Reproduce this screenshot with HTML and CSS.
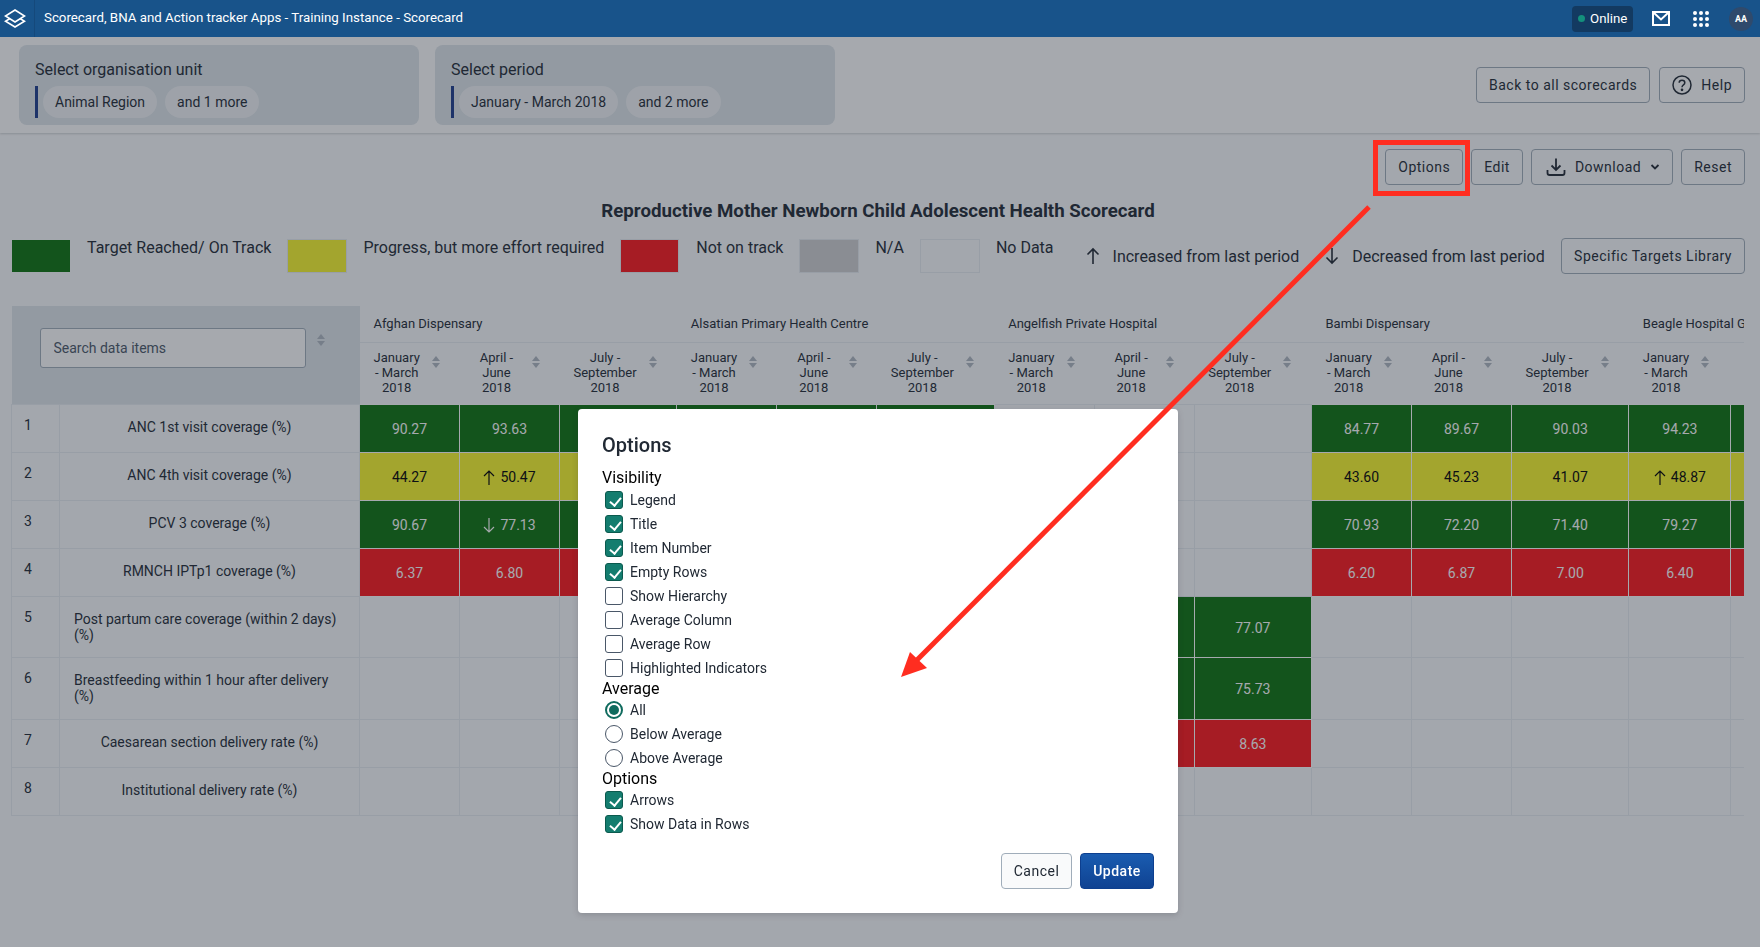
FILE: index.html
```html
<!DOCTYPE html>
<html lang="en">
<head>
    <meta charset="UTF-8">
    <meta name="viewport" content="width=device-width, initial-scale=1.0">
    <title>Scorecard</title>
    <link rel="stylesheet" href="styles.css">
</head>
<body>
    <header class="topbar">
        <div class="topbar-logo">
            <svg width="22" height="19" viewBox="0 0 22 19" fill="none" stroke="#fff" stroke-width="1.6">
                <path d="M11 1 L20.5 7 L11 13 L1.5 7 Z"/>
                <path d="M6 9.5 L1.5 12.2 L11 18 L20.5 12.2 L16 9.5"/>
            </svg>
        </div>
        <div class="topbar-title">Scorecard, BNA and Action tracker Apps - Training Instance - Scorecard</div>
        <div class="online"><span class="online-dot"></span>Online</div>
        <svg class="mail-icon" width="18" height="15" viewBox="0 0 18 15" fill="none" stroke="#fff" stroke-width="2">
            <rect x="1" y="1" width="16" height="13"/>
            <path d="M1.5 1.5 L9 8.5 L16.5 1.5"/>
        </svg>
        <div class="apps-icon">
            <i></i><i></i><i></i><i></i><i></i><i></i><i></i><i></i><i></i>
        </div>
        <div class="avatar">AA</div>
    </header>

    <section class="filters">
        <div class="filter-card">
            <div class="filter-label">Select organisation unit</div>
            <div class="filter-chips">
                <span class="chip">Animal Region</span>
                <span class="chip">and 1 more</span>
            </div>
        </div>
        <div class="filter-card">
            <div class="filter-label">Select period</div>
            <div class="filter-chips">
                <span class="chip">January - March 2018</span>
                <span class="chip">and 2 more</span>
            </div>
        </div>
        <div class="filter-actions">
            <button class="btn">Back to all scorecards</button>
            <button class="btn">
                <svg width="20" height="20" viewBox="0 0 20 20" fill="none" stroke="#212934" stroke-width="1.5">
                    <circle cx="10" cy="10" r="9"/>
                    <path d="M7.2 7.8 C7.2 4.4 12.8 4.4 12.8 7.8 C12.8 10 10 9.8 10 12.2"/>
                    <circle cx="10" cy="14.8" r="0.6" fill="#212934"/>
                </svg>
                Help
            </button>
        </div>
    </section>

    <main class="content">
        <div class="actions">
            <button class="btn">Options</button>
            <button class="btn">Edit</button>
            <button class="btn btn-download">
                <svg width="20" height="20" viewBox="0 0 20 20" fill="none" stroke="#212934" stroke-width="1.8">
                    <path d="M10 1.5 V12.5 M5.5 8.5 L10 13 L14.5 8.5"/>
                    <path d="M1.5 13 V16 Q1.5 18 3.5 18 H16.5 Q18.5 18 18.5 16 V13"/>
                </svg>
                Download
                <svg class="caret" width="10" height="6" viewBox="0 0 10 6" fill="none" stroke="#212934" stroke-width="1.8">
                    <path d="M1.5 1 L5 4.5 L8.5 1"/>
                </svg>
            </button>
            <button class="btn">Reset</button>
        </div>

        <h1 class="scorecard-title">Reproductive Mother Newborn Child Adolescent Health Scorecard</h1>

        <div class="legend">
            <span class="swatch swatch-green"></span><span class="legend-text legend-target">Target Reached/ On Track</span>
            <span class="swatch swatch-yellow"></span><span class="legend-text legend-progress">Progress, but more effort required</span>
            <span class="swatch swatch-red"></span><span class="legend-text legend-track">Not on track</span>
            <span class="swatch swatch-grey"></span><span class="legend-text legend-na">N/A</span>
            <span class="swatch swatch-empty"></span><span class="legend-text legend-nodata">No Data</span>
            <span class="legend-arrow">
                <svg width="14" height="18" viewBox="0 0 14 18" fill="none" stroke="#212934" stroke-width="1.6"><path d="M7 17 V2 M1.5 7.5 L7 2 L12.5 7.5"/></svg>
                Increased from last period
            </span>
            <span class="legend-arrow legend-down">
                <svg width="14" height="18" viewBox="0 0 14 18" fill="none" stroke="#212934" stroke-width="1.6"><path d="M7 1 V16 M1.5 10.5 L7 16 L12.5 10.5"/></svg>
                Decreased from last period
            </span>
            <button class="btn legend-btn">Specific Targets Library</button>
        </div>

        <div class="table-wrap">
            <table class="scorecard">
                <colgroup>
                    <col class="c-num"><col class="c-name">
                    <col class="c1"><col class="c1"><col class="c2">
                    <col class="c1"><col class="c1"><col class="c2">
                    <col class="c1"><col class="c1"><col class="c2">
                    <col class="c1"><col class="c1"><col class="c2">
                    <col class="c3"><col class="c1">
                </colgroup>
                <thead>
                    <tr class="org-row">
                        <th class="search-head" colspan="2" rowspan="2">
                            <div class="search-wrap">
                                <input class="search" placeholder="Search data items">
                                <span class="sort"></span>
                            </div>
                        </th>
                        <th colspan="3">Afghan Dispensary</th>
                        <th colspan="3">Alsatian Primary Health Centre</th>
                        <th colspan="3">Angelfish Private Hospital</th>
                        <th colspan="3">Bambi Dispensary</th>
                        <th colspan="2">Beagle Hospital Ground</th>
                    </tr>
                    <tr class="period-row">
                        <th><div class="period"><span>January<br>- March<br>2018</span><i class="sort"></i></div></th>
                        <th><div class="period"><span>April -<br>June<br>2018</span><i class="sort"></i></div></th>
                        <th><div class="period"><span>July -<br>September<br>2018</span><i class="sort"></i></div></th>
                        <th><div class="period"><span>January<br>- March<br>2018</span><i class="sort"></i></div></th>
                        <th><div class="period"><span>April -<br>June<br>2018</span><i class="sort"></i></div></th>
                        <th><div class="period"><span>July -<br>September<br>2018</span><i class="sort"></i></div></th>
                        <th><div class="period"><span>January<br>- March<br>2018</span><i class="sort"></i></div></th>
                        <th><div class="period"><span>April -<br>June<br>2018</span><i class="sort"></i></div></th>
                        <th><div class="period"><span>July -<br>September<br>2018</span><i class="sort"></i></div></th>
                        <th><div class="period"><span>January<br>- March<br>2018</span><i class="sort"></i></div></th>
                        <th><div class="period"><span>April -<br>June<br>2018</span><i class="sort"></i></div></th>
                        <th><div class="period"><span>July -<br>September<br>2018</span><i class="sort"></i></div></th>
                        <th><div class="period"><span>January<br>- March<br>2018</span><i class="sort"></i></div></th>
                        <th></th>
                    </tr>
                </thead>
                <tbody>
                    <tr class="row-short">
                        <td class="num">1</td><td class="name">ANC 1st visit coverage (%)</td>
                        <td class="green">90.27</td><td class="green">93.63</td><td class="green"></td>
                        <td class="green"></td><td class="green"></td><td class="green"></td>
                        <td></td><td></td><td></td>
                        <td class="green">84.77</td><td class="green">89.67</td><td class="green">90.03</td>
                        <td class="green">94.23</td><td class="green"></td>
                    </tr>
                    <tr class="row-short">
                        <td class="num">2</td><td class="name">ANC 4th visit coverage (%)</td>
                        <td class="yellow">44.27</td>
                        <td class="yellow"><svg class="up" width="12" height="15" viewBox="0 0 12 15" fill="none" stroke="currentColor" stroke-width="1.2"><path d="M6 15 V1 M1 6 L6 1 L11 6"/></svg>50.47</td>
                        <td class="yellow"></td>
                        <td class="yellow"></td><td class="yellow"></td><td class="yellow"></td>
                        <td></td><td></td><td></td>
                        <td class="yellow">43.60</td><td class="yellow">45.23</td><td class="yellow">41.07</td>
                        <td class="yellow"><svg class="up" width="12" height="15" viewBox="0 0 12 15" fill="none" stroke="currentColor" stroke-width="1.2"><path d="M6 15 V1 M1 6 L6 1 L11 6"/></svg>48.87</td>
                        <td class="yellow"></td>
                    </tr>
                    <tr class="row-short">
                        <td class="num">3</td><td class="name">PCV 3 coverage (%)</td>
                        <td class="green">90.67</td>
                        <td class="green"><svg class="up" width="12" height="15" viewBox="0 0 12 15" fill="none" stroke="currentColor" stroke-width="1.2"><path d="M6 0 V14 M1 9 L6 14 L11 9"/></svg>77.13</td>
                        <td class="green"></td>
                        <td class="green"></td><td class="green"></td><td class="green"></td>
                        <td></td><td></td><td></td>
                        <td class="green">70.93</td><td class="green">72.20</td><td class="green">71.40</td>
                        <td class="green">79.27</td><td class="green"></td>
                    </tr>
                    <tr class="row-short">
                        <td class="num">4</td><td class="name">RMNCH IPTp1 coverage (%)</td>
                        <td class="red">6.37</td><td class="red">6.80</td><td class="red"></td>
                        <td class="red"></td><td class="red"></td><td class="red"></td>
                        <td></td><td></td><td></td>
                        <td class="red">6.20</td><td class="red">6.87</td><td class="red">7.00</td>
                        <td class="red">6.40</td><td class="red"></td>
                    </tr>
                    <tr class="row-tall">
                        <td class="num">5</td><td class="name name-left">Post partum care coverage (within 2 days) (%)</td>
                        <td></td><td></td><td></td><td></td><td></td><td></td>
                        <td></td><td class="green"></td><td class="green">77.07</td>
                        <td></td><td></td><td></td><td></td><td></td>
                    </tr>
                    <tr class="row-tall">
                        <td class="num">6</td><td class="name name-left">Breastfeeding within 1 hour after delivery (%)</td>
                        <td></td><td></td><td></td><td></td><td></td><td></td>
                        <td></td><td class="green"></td><td class="green">75.73</td>
                        <td></td><td></td><td></td><td></td><td></td>
                    </tr>
                    <tr class="row-short">
                        <td class="num">7</td><td class="name">Caesarean section delivery rate (%)</td>
                        <td></td><td></td><td></td><td></td><td></td><td></td>
                        <td></td><td class="red"></td><td class="red">8.63</td>
                        <td></td><td></td><td></td><td></td><td></td>
                    </tr>
                    <tr class="row-short">
                        <td class="num">8</td><td class="name">Institutional delivery rate (%)</td>
                        <td></td><td></td><td></td><td></td><td></td><td></td>
                        <td></td><td></td><td></td>
                        <td></td><td></td><td></td><td></td><td></td>
                    </tr>
                </tbody>
            </table>
        </div>
    </main>

    <div class="backdrop"></div>

    <div class="modal">
        <h2 class="modal-title">Options</h2>

        <h3 class="group-title group-first">Visibility</h3>
        <label class="check on"><span class="box"></span>Legend</label>
        <label class="check on"><span class="box"></span>Title</label>
        <label class="check on"><span class="box"></span>Item Number</label>
        <label class="check on"><span class="box"></span>Empty Rows</label>
        <label class="check"><span class="box"></span>Show Hierarchy</label>
        <label class="check"><span class="box"></span>Average Column</label>
        <label class="check"><span class="box"></span>Average Row</label>
        <label class="check"><span class="box"></span>Highlighted Indicators</label>

        <h3 class="group-title">Average</h3>
        <label class="check radio on"><span class="box"></span>All</label>
        <label class="check radio"><span class="box"></span>Below Average</label>
        <label class="check radio"><span class="box"></span>Above Average</label>

        <h3 class="group-title">Options</h3>
        <label class="check on"><span class="box"></span>Arrows</label>
        <label class="check on"><span class="box"></span>Show Data in Rows</label>

        <div class="modal-footer">
            <button class="btn btn-cancel">Cancel</button>
            <button class="btn btn-primary">Update</button>
        </div>
    </div>

    <!-- annotation drawn over the screenshot -->
    <div class="callout"></div>
    <svg class="callout-arrow" width="1760" height="947" viewBox="0 0 1760 947">
        <path d="M1369 207 L917 660" stroke="#ff2d20" stroke-width="5" fill="none"/>
        <path d="M901 677 L910 652 L927 668 Z" fill="#ff2d20"/>
    </svg>
</body>
</html>
```

FILE: styles.css
```css
* {
    box-sizing: border-box;
}
html, body {
    height: 100%;
}
body {
    margin: 0;
    overflow: hidden;
    background-color: #fbfcfd;
    color: #212934;
    font-family: Roboto, "Liberation Sans", sans-serif;
    font-size: 14px;
}

/* top bar */
.topbar {
    position: relative;
    z-index: 3;
    display: flex;
    align-items: center;
    height: 37px;
    background-color: #18538a;
    color: #fff;
}
.topbar-logo {
    display: flex;
    align-items: center;
    justify-content: center;
    width: 35px;
    height: 37px;
    padding-right: 5px;
    border-right: 1px solid #15497b;
}
.topbar-title {
    flex: 1;
    margin-left: 9px;
    padding-bottom: 2px;
    font-size: 13.3px;
    font-weight: 400;
}
.online {
    display: flex;
    align-items: center;
    gap: 5px;
    width: 61px;
    height: 26px;
    padding-left: 6px;
    border-radius: 4px;
    background-color: #133a61;
    font-size: 13.3px;
    font-weight: 400;
}
.online-dot {
    width: 7px;
    height: 7px;
    border-radius: 50%;
    background-color: #14907c;
}
.mail-icon {
    margin-left: 19px;
}
.apps-icon {
    display: grid;
    grid-template-columns: repeat(3, 4px);
    gap: 2px;
    margin-left: 23px;
}
.apps-icon i {
    width: 4px;
    height: 4px;
    border-radius: 50%;
    background-color: #fff;
}
.avatar {
    width: 24px;
    height: 24px;
    margin-left: 20px;
    margin-right: 7px;
    border-radius: 50%;
    background-color: #2f4a6c;
    font-size: 9px;
    font-weight: 700;
    line-height: 24px;
    text-align: center;
}

/* filters */
.filters {
    display: flex;
    gap: 16px;
    height: 96px;
    padding: 8px 15px 8px 19px;
    background-color: #fff;
    box-shadow: 0 1px 2px rgba(33, 41, 52, 0.2);
}
.filter-card {
    width: 400px;
    height: 80px;
    padding: 15px 16px;
    border-radius: 8px;
    background-color: #dfe6eb;
}
.filter-label {
    font-size: 16px;
    line-height: 20px;
}
.filter-chips {
    display: flex;
    gap: 8px;
    height: 32px;
    margin-top: 6px;
    padding-left: 5px;
    border-left: 3px solid #1c3b8c;
}
.chip {
    display: flex;
    align-items: center;
    padding: 0 12px;
    border-radius: 16px;
    background-color: #f2f4f7;
    font-size: 14px;
}
.filter-actions {
    display: flex;
    gap: 9px;
    margin-left: auto;
    padding-top: 22px;
}
.btn {
    display: inline-flex;
    align-items: center;
    justify-content: center;
    gap: 9px;
    height: 36px;
    padding: 0 12px;
    border: 1px solid #a0adba;
    border-radius: 4px;
    background-color: transparent;
    color: #212934;
    font-family: inherit;
    font-size: 14px;
    letter-spacing: 0.5px;
}
.btn-download {
    padding-left: 14px;
}

/* content */
.content {
    padding: 16px 15px 0 11px;
}
.actions {
    display: flex;
    justify-content: flex-end;
    gap: 8px;
}
.scorecard-title {
    margin: 14px 0 0;
    font-size: 18.7px;
    font-weight: 700;
    line-height: 24px;
    text-align: center;
}

/* legend */
.legend {
    display: flex;
    height: 36px;
    margin-top: 15px;
}
.swatch {
    flex: none;
    width: 60px;
    height: 34px;
    margin-top: 1px;
    border: 1px solid #e8edf2;
}
.swatch-green {
    width: 58px;
    height: 32px;
    margin-top: 2px;
    margin-left: 1px;
    background-color: #0b720c;
    border-color: #0b720c;
}
.swatch-yellow {
    background-color: #faf82a;
}
.swatch-red {
    width: 59px;
    background-color: #ff1419;
}
.swatch-grey {
    background-color: #d0d0d2;
}
.swatch-empty {
    background-color: #fbfcfd;
}
.legend-text {
    margin-left: 16px;
    font-size: 16px;
    line-height: 20px;
}
.legend-target {
    margin-left: 17px;
    margin-right: 16px;
}
.legend-progress {
    margin-right: 16px;
}
.legend-track {
    margin-left: 17px;
    margin-right: 16px;
}
.legend-na {
    margin-right: 16px;
}
.legend-nodata {
    margin-right: 32px;
}
.legend-arrow {
    display: flex;
    align-items: center;
    gap: 13px;
    height: 36px;
    font-size: 16px;
}
.legend-down {
    margin-left: 26px;
}
.legend-btn {
    margin-left: auto;
}

/* table */
.table-wrap {
    width: 1733px;
    margin-top: 32px;
    overflow: hidden;
}
.scorecard {
    width: 1820px;
    border-collapse: collapse;
    table-layout: fixed;
    font-size: 14px;
}
.c-num { width: 48px; }
.c-name { width: 300px; }
.c1 { width: 100px; }
.c2 { width: 117.33px; }
.c3 { width: 102px; }

.scorecard th {
    border: 1px solid #e8edf2;
    border-width: 0 0 1px 0;
    font-weight: 400;
    text-align: left;
}
.org-row th {
    height: 36px;
    padding: 0 14px;
    white-space: nowrap;
    overflow: hidden;
    font-size: 13px;
}
.period-row th {
    height: 62px;
    padding: 0 14px 2px;
    border-bottom: 0;
}
.period {
    display: flex;
    align-items: flex-start;
    gap: 12px;
    font-size: 13px;
    line-height: 15px;
    text-align: center;
}
.period span {
    min-width: 46px;
}
.period .sort {
    margin-top: 6px;
}
.org-row .search-head {
    padding: 0;
    background-color: #dfe6eb;
    vertical-align: top;
}
.search-wrap {
    display: flex;
    gap: 11px;
    padding: 22px 0 0 28px;
}
.search {
    width: 266px;
    height: 40px;
    padding: 0 13px;
    border: 1px solid #a0adba;
    border-radius: 3px;
    background-color: #fff;
    font-family: inherit;
    font-size: 14px;
}
.search::placeholder {
    color: #4a5768;
}
.sort {
    position: relative;
    display: block;
    flex: none;
    width: 8px;
    height: 12px;
    margin-top: 6px;
}
.sort::before,
.sort::after {
    content: "";
    position: absolute;
    left: 0;
    border-left: 4px solid transparent;
    border-right: 4px solid transparent;
}
.sort::before {
    top: 0;
    border-bottom: 5px solid #b0b8c2;
}
.sort::after {
    bottom: 0;
    border-top: 5px solid #b0b8c2;
}
.scorecard td {
    padding: 0;
    border: 1px solid #e8edf2;
    text-align: center;
}
.row-short td {
    height: 48px;
}
.row-tall td {
    height: 61.5px;
}
.scorecard .num {
    padding: 12px 0 0 12px;
    text-align: left;
    vertical-align: top;
}
.scorecard .name {
    padding: 0 20px 2px;
}
.scorecard .name-left {
    padding: 0 14px;
    line-height: 16px;
    text-align: left;
}
.scorecard td.green,
.scorecard td.yellow,
.scorecard td.red {
    padding-top: 2px;
    border-color: #fff;
}
.green {
    background-color: #0b720c;
    color: #fff;
}
.yellow {
    background-color: #faf82a;
    color: #000;
}
.red {
    background-color: #ff1419;
    color: #fff;
}
.up {
    margin-right: 5px;
    vertical-align: -3px;
}

/* modal */
.backdrop {
    position: fixed;
    top: 37px;
    left: 0;
    right: 0;
    bottom: 0;
    z-index: 1;
    background-color: rgba(33, 41, 52, 0.4);
}
.modal {
    position: fixed;
    top: 409px;
    left: 578px;
    z-index: 2;
    width: 600px;
    height: 504px;
    padding: 24px;
    border-radius: 4px;
    background-color: #fff;
    box-shadow: 0 2px 6px rgba(33, 41, 52, 0.2);
}
.modal-title {
    margin: 0 0 11px;
    font-size: 20px;
    font-weight: 500;
    line-height: 24px;
}
.group-title {
    margin: -1px 0;
    font-size: 16px;
    font-weight: 400;
    line-height: 20px;
    color: #000;
}
.group-first {
    margin: 0;
}
.check {
    display: flex;
    align-items: center;
    gap: 7px;
    height: 24px;
    padding-left: 3px;
    padding-bottom: 1px;
    font-size: 14px;
}
.box {
    position: relative;
    width: 18px;
    height: 18px;
    margin-top: 1px;
    border: 1px solid #4a5768;
    border-radius: 3px;
}
.check.on .box {
    border-color: #0b5a4e;
    background-color: #147d6f;
}
.check.on .box::after {
    content: "";
    position: absolute;
    left: 5.5px;
    top: 2.5px;
    width: 5px;
    height: 9px;
    border: solid #fff;
    border-width: 0 2px 2px 0;
    transform: rotate(40deg);
}
.radio .box {
    border-radius: 50%;
}
.check.radio.on .box {
    border: 2px solid #0f6b5e;
    background-color: #fff;
}
.check.radio.on .box::after {
    left: 2px;
    top: 2px;
    width: 10px;
    height: 10px;
    border: 0;
    border-radius: 50%;
    background-color: #0f6b5e;
    transform: none;
}
.modal-footer {
    position: absolute;
    right: 24px;
    bottom: 24px;
    display: flex;
    gap: 8px;
}
.btn-cancel {
    width: 71px;
    padding: 0;
    background-color: #f9fafb;
}
.btn-primary {
    width: 74px;
    padding: 0;
    border-color: #0d3f8f;
    background: linear-gradient(#1a5cb0, #0f4292);
    color: #fff;
    font-weight: 500;
}

/* red annotation */
.callout {
    position: fixed;
    top: 140px;
    left: 1373px;
    z-index: 4;
    width: 97px;
    height: 56px;
    border: 5px solid #ff2d20;
}
.callout-arrow {
    position: fixed;
    top: 0;
    left: 0;
    z-index: 4;
}
```
